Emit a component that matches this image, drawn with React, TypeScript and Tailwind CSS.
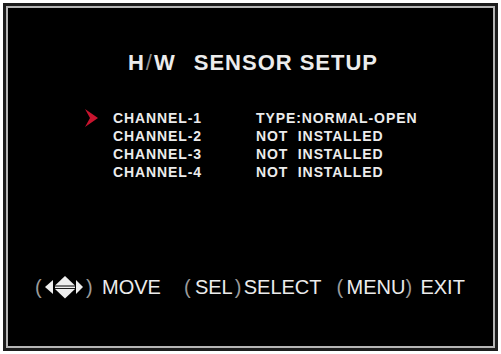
import React from 'react';

const rows = [
  { ch: 'CHANNEL-1', val: 'TYPE:NORMAL-OPEN', active: true },
  { ch: 'CHANNEL-2', val: 'NOT  INSTALLED', active: false },
  { ch: 'CHANNEL-3', val: 'NOT  INSTALLED', active: false },
  { ch: 'CHANNEL-4', val: 'NOT  INSTALLED', active: false },
];

const Arrows: React.FC = () => (
  <svg width="44" height="24" viewBox="0 0 44 24" className="shrink-0">
    <path d="M5 12 L13 5 L13 19 Z" fill="#eee" />
    <path d="M43 12 L36 5 L36 19 Z" fill="#eee" />
    <path d="M25 1 L35 10.5 L15 10.5 Z" fill="#eee" />
    <rect x="15" y="11.5" width="20" height="1.6" fill="#eee" />
    <path d="M25 23.5 L35 14 L15 14 Z" fill="#eee" />
  </svg>
);

const Paren: React.FC<{ c: string; className?: string }> = ({ c, className }) => (
  <span className={`text-[#9a9a9a] ${className ?? ''}`}>{c}</span>
);

const App: React.FC = () => {
  return (
    <div className="w-[501px] h-[354px] bg-white p-[3px] font-['Liberation_Sans',Arial,sans-serif]">
      <div className="w-full h-full border-[3px] border-[#1c1c1c]">
        <div className="w-full h-full border-2 border-[#b5b5b5] bg-black flex flex-col text-[#ececec]">
          <h1 className="mt-[44px] pl-[5px] flex justify-center text-[22px] leading-[22px] font-bold tracking-[1px]">
            <span>H</span>
            <span className="text-[#8a8a8a] font-normal mx-[1px]">/</span>
            <span>W</span>
            <span className="ml-[18px]">SENSOR</span>
            <span className="ml-[7px]">SETUP</span>
          </h1>
          <div className="mt-[35px] flex flex-col text-[14px] font-bold tracking-[0.9px] leading-[18px]">
            {rows.map((r) => (
              <div key={r.ch} className="flex items-center">
                <div className="w-[105px] flex justify-end pr-[15px]">
                  {r.active && (
                    <svg width="13" height="18" viewBox="0 0 13 18">
                      <path d="M0 0 L13 9 L0 18 L5 9 Z" fill="#c8142e" />
                    </svg>
                  )}
                </div>
                <div className="w-[143px]">{r.ch}</div>
                <div className="whitespace-pre">{r.val}</div>
              </div>
            ))}
          </div>
          <div className="mt-auto mb-[47px] flex items-center pl-[27px] text-[20px] leading-[24px]">
            <Paren c="(" className="w-[5px]" />
            <Arrows />
            <Paren c=")" className="ml-[2px] w-[8px]" />
            <span className="ml-[8px]">MOVE</span>
            <Paren c="(" className="ml-[23px] w-[8px]" />
            <span className="ml-[3px]">SEL</span>
            <Paren c=")" className="ml-[2px] w-[7px]" />
            <span className="ml-[2px]">SELECT</span>
            <Paren c="(" className="ml-[15px] w-[8px]" />
            <span className="ml-[2px]">MENU</span>
            <Paren c=")" className="w-[7px]" />
            <span className="ml-[8px]">EXIT</span>
          </div>
        </div>
      </div>
    </div>
  );
};

export default App;
